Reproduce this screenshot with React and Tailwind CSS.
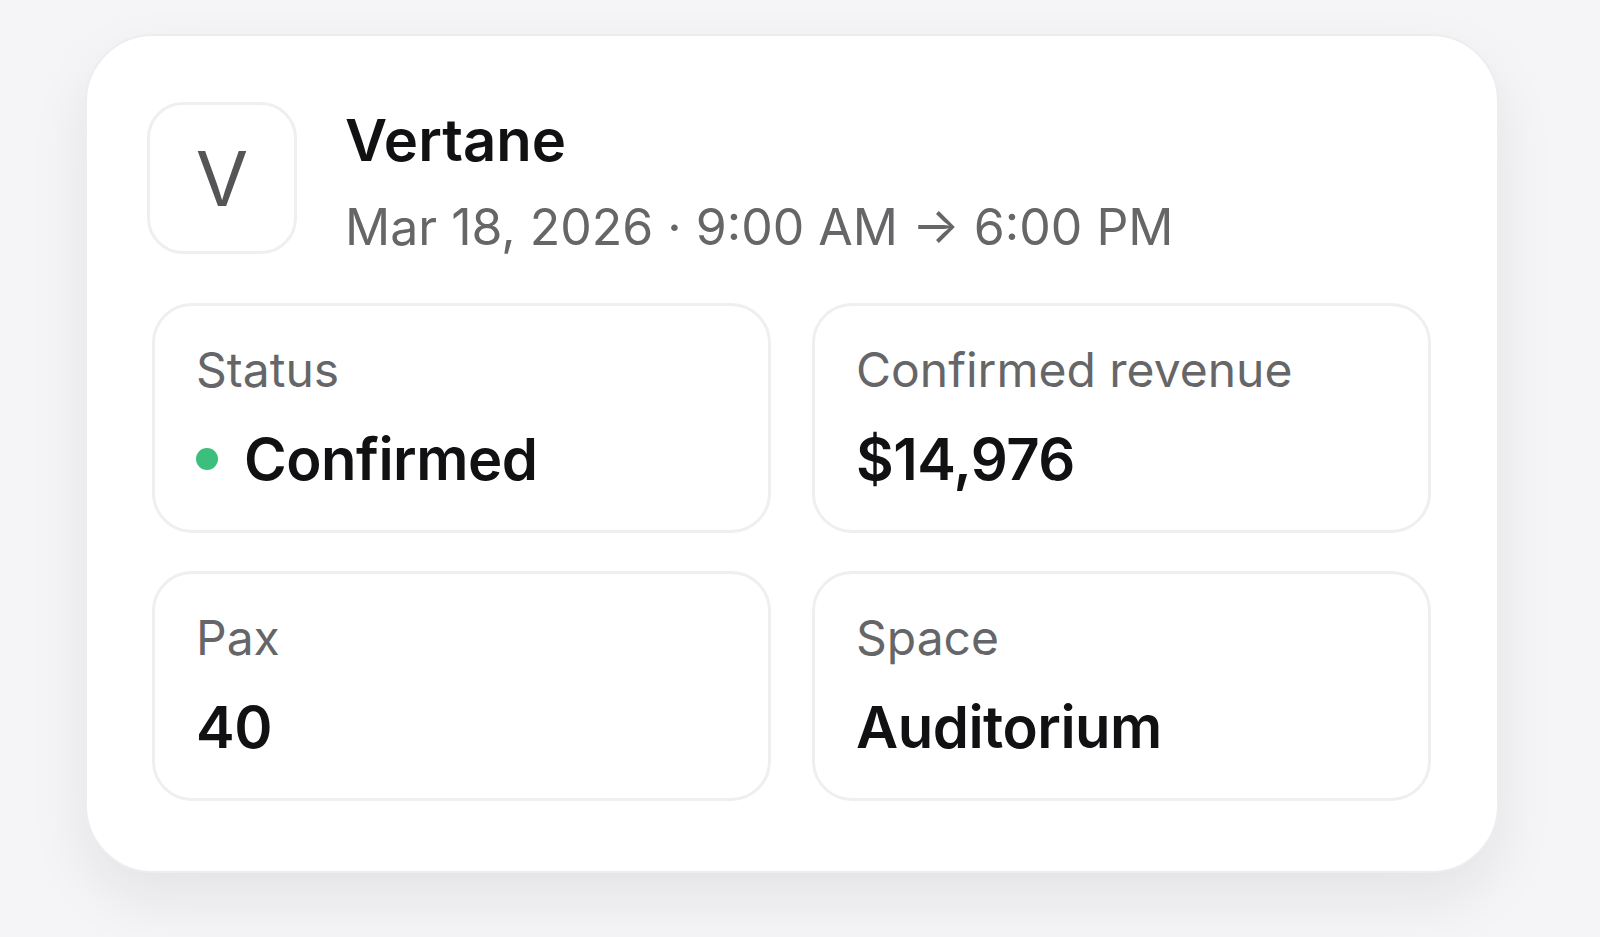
const stats = [
  { label: 'Status', value: 'Confirmed', dot: true },
  { label: 'Confirmed revenue', value: '$14,976' },
  { label: 'Pax', value: '40' },
  { label: 'Space', value: 'Auditorium' },
]

function StatTile({ label, value, dot }) {
  return (
    <div className="h-[230px] rounded-[40px] border-[3px] border-[#eeeff1] bg-white px-[41px] pt-[34px]">
      <div className="text-[48px] leading-[60px] text-[#666669]">{label}</div>
      <div className="mt-[24px] flex items-center gap-[26px]">
        {dot && <span className="h-[22px] w-[22px] rounded-full bg-[#3cbf7c]" />}
        <span className="text-[58px] leading-[70px] font-semibold tracking-[-0.5px] text-[#111113]">{value}</span>
      </div>
    </div>
  )
}

export default function App() {
  return (
    <div
      className="min-h-screen bg-[#f5f5f7] pt-[34px] pl-[85px]"
      style={{ fontFamily: 'Inter, "Noto Sans", sans-serif' }}
    >
      <div className="w-[1414px] rounded-[68px] border-2 border-[#ededf0] bg-white pt-[66px] pr-[66px] pb-[70px] pl-[60px] shadow-[0_26px_60px_rgba(20,20,40,0.08)]">
        {/* header: avatar + name */}
        <div className="flex items-start gap-[48px]">
          <div className="flex h-[152px] w-[150px] shrink-0 items-center justify-center rounded-[36px] border-[3px] border-[#eeeff1] text-[76px] text-[#555558]">
            V
          </div>
          <div className="flex flex-col pt-[3px]">
            <div className="text-[58px] leading-[70px] font-semibold text-[#111113]">Vertane</div>
            <div className="mt-[22px] text-[50px] leading-[60px] text-[#666669]">
              Mar 18, 2026 · 9:00 AM → 6:00 PM
            </div>
          </div>
        </div>

        <div className="mt-[46px] ml-[5px] grid grid-cols-2 gap-x-[41px] gap-y-[38px]">
          {stats.map((s) => (
            <StatTile key={s.label} {...s} />
          ))}
        </div>
      </div>
    </div>
  )
}
